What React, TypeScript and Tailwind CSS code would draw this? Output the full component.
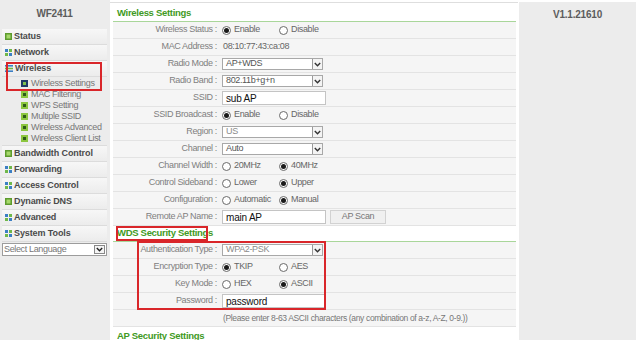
import React from 'react';

const font = "font-['Liberation_Sans',Arial,sans-serif]";

function Chevron() {
  return (
    <span className="flex h-full w-[10px] items-center justify-center border-l border-[#9a9a9a] bg-[#f4f4f4]">
      <svg width="7" height="5" viewBox="0 0 7 5">
        <path d="M0.8 1 L3.5 3.8 L6.2 1" fill="none" stroke="#333" strokeWidth="1.4" />
      </svg>
    </span>
  );
}

function Select({ value, muted }: { value: string; muted?: boolean }) {
  return (
    <div className="flex h-[12px] w-[101px] items-center justify-between border border-[#a8a8a8] bg-white">
      <span className={`pl-[3px] ${muted ? 'text-[#8a8a8a]' : 'text-[#555]'}`}>{value}</span>
      <Chevron />
    </div>
  );
}

function Input({ value }: { value: string }) {
  return (
    <div className="flex h-[14px] w-[104px] items-center border border-[#c4c4c4] bg-white pl-[3px] text-[10px] tracking-[-0.2px] text-[#111]">
      {value}
    </div>
  );
}

function Radio({ label, checked }: { label: string; checked?: boolean }) {
  return (
    <span className="flex w-[57px] items-center">
      <span className="flex h-[9px] w-[9px] items-center justify-center rounded-full border border-[#6a6a6a] bg-white">
        {checked && <span className="h-[5px] w-[5px] rounded-full bg-[#1a1a1a]" />}
      </span>
      <span className="ml-[3px] text-[#666]">{label}</span>
    </span>
  );
}

function Row({ label, children }: { label?: string; children: React.ReactNode }) {
  return (
    <div className="flex h-[17px] items-center border-b border-[#e3e3e3] bg-[#f5f5f5]">
      <div className="w-[106px] pr-[2px] text-right text-[#808080]">{label ? `${label} :` : ''}</div>
      <div className="flex items-center pl-[3px]">{children}</div>
    </div>
  );
}

function Header({ title, top }: { title: string; top?: boolean }) {
  return (
    <div className={`flex ${top ? 'h-[19px] pt-[2px]' : 'h-[16px]'} items-center border-b border-[#a9d69a] pl-[4px] text-[9.5px] font-bold tracking-[-0.3px] text-[#3f9a24]`}>
      {title}
    </div>
  );
}

function Icon({ kind }: { kind: string }) {
  if (kind === 'grid')
    return (
      <svg width="7" height="7" viewBox="0 0 7 7" className="shrink-0">
        <rect x="0" y="0" width="3" height="3" fill="#3b7fc4" />
        <rect x="4" y="0" width="3" height="3" fill="#6fb84a" />
        <rect x="0" y="4" width="3" height="3" fill="#6fb84a" />
        <rect x="4" y="4" width="3" height="3" fill="#3b7fc4" />
      </svg>
    );
  if (kind === 'lines')
    return (
      <svg width="8" height="7" viewBox="0 0 8 7" className="shrink-0">
        <rect x="0" y="0" width="8" height="1.6" fill="#3b7fc4" />
        <rect x="0" y="2.7" width="8" height="1.6" fill="#6fb84a" />
        <rect x="0" y="5.4" width="8" height="1.6" fill="#3b7fc4" />
      </svg>
    );
  if (kind === 'sel')
    return (
      <svg width="7" height="7" viewBox="0 0 7 7" className="shrink-0">
        <rect x="0" y="0" width="7" height="7" fill="#1f3a66" />
        <rect x="2" y="2" width="3" height="3" fill="#7fc24e" />
      </svg>
    );
  if (kind === 'sub')
    return (
      <svg width="7" height="7" viewBox="0 0 7 7" className="shrink-0">
        <rect x="0" y="0" width="7" height="7" fill="#8cc63f" />
        <rect x="2" y="2" width="3" height="3" fill="#2d5a1a" />
      </svg>
    );
  return (
    <svg width="7" height="7" viewBox="0 0 7 7" className="shrink-0">
      <rect x="0" y="0" width="7" height="7" fill="#5d9b2e" />
      <rect x="1.5" y="1.5" width="4" height="4" fill="#a6d86a" />
    </svg>
  );
}

function MenuItem({ label, icon }: { label: string; icon: string }) {
  return (
    <div className="flex h-[16px] items-center gap-[2px] border-b border-[#dcdcdc] bg-gradient-to-b from-[#f7f7f7] to-[#ececec] pl-[3px] text-[9px] font-bold tracking-[-0.1px] text-[#4a4a4a]">
      <Icon kind={icon} />
      <span>{label}</span>
    </div>
  );
}

function SubItem({ label, selected }: { label: string; selected?: boolean }) {
  return (
    <div className="flex h-[11px] items-center gap-[3px] pl-[19px] text-[#777]">
      <Icon kind={selected ? 'sel' : 'sub'} />
      <span>{label}</span>
    </div>
  );
}

export default function App() {
  return (
    <div className={`${font} relative flex h-[340px] w-[636px] overflow-hidden bg-white text-[9px] tracking-[-0.35px]`}>
      {/* Sidebar */}
      <div className="w-[110px] shrink-0 bg-[#ececec] pl-[2px] pr-[3px]">
        <div className="flex h-[29px] items-start justify-center pt-[6px] text-[10px] font-bold tracking-[-0.2px] text-[#5c5c5c]">
          WF2411
        </div>
        <MenuItem icon="sq" label="Status" />
        <MenuItem icon="grid" label="Network" />
        <MenuItem icon="lines" label="Wireless" />
        <div className="border-b border-[#dcdcdc] pt-[1px] pb-[1px]">
          <SubItem label="Wireless Settings" selected />
          <SubItem label="MAC Filtering" />
          <SubItem label="WPS Setting" />
          <SubItem label="Multiple SSID" />
          <SubItem label="Wireless Advanced" />
          <SubItem label="Wireless Client List" />
        </div>
        <MenuItem icon="sq" label="Bandwidth Control" />
        <MenuItem icon="grid" label="Forwarding" />
        <MenuItem icon="grid" label="Access Control" />
        <MenuItem icon="sq" label="Dynamic DNS" />
        <MenuItem icon="grid" label="Advanced" />
        <MenuItem icon="grid" label="System Tools" />
        <div className="mt-[1px] flex h-[13px] items-center justify-between border border-[#9c9c9c] bg-white">
          <span className="pl-[1px] text-[#777]">Select Language</span>
          <span className="mr-[1px] flex h-[9px] w-[11px] items-center justify-center border border-[#888] bg-[#f4f4f4]">
            <svg width="7" height="5" viewBox="0 0 7 5">
              <path d="M0.8 1 L3.5 3.8 L6.2 1" fill="none" stroke="#222" strokeWidth="1.4" />
            </svg>
          </span>
        </div>
      </div>

      {/* Main */}
      <div className="mt-[2px] w-[408px] shrink-0 border-t border-[#dedede] bg-white pl-[3px] pr-[2px]">
        <Header title="Wireless Settings" top />
        <Row label="Wireless Status">
          <Radio label="Enable" checked />
          <Radio label="Disable" />
        </Row>
        <Row label="MAC Address">
          <span className="pl-[1px] text-[#666]">08:10:77:43:ca:08</span>
        </Row>
        <Row label="Radio Mode">
          <Select value="AP+WDS" />
        </Row>
        <Row label="Radio Band">
          <Select value="802.11b+g+n" />
        </Row>
        <Row label="SSID">
          <Input value="sub AP" />
        </Row>
        <Row label="SSID Broadcast">
          <Radio label="Enable" checked />
          <Radio label="Disable" />
        </Row>
        <Row label="Region">
          <Select value="US" muted />
        </Row>
        <Row label="Channel">
          <Select value="Auto" />
        </Row>
        <Row label="Channel Width">
          <Radio label="20MHz" />
          <Radio label="40MHz" checked />
        </Row>
        <Row label="Control Sideband">
          <Radio label="Lower" />
          <Radio label="Upper" checked />
        </Row>
        <Row label="Configuration">
          <Radio label="Automatic" />
          <Radio label="Manual" checked />
        </Row>
        <Row label="Remote AP Name">
          <Input value="main AP" />
          <button className="ml-[4px] flex h-[14px] w-[56px] items-center justify-center border border-[#d2d2d2] bg-[#f0f0f0] text-[#777]">
            AP Scan
          </button>
        </Row>
        <Header title="WDS Security Settings" />
        <Row label="Authentication Type">
          <Select value="WPA2-PSK" muted />
        </Row>
        <Row label="Encryption Type">
          <Radio label="TKIP" checked />
          <Radio label="AES" />
        </Row>
        <Row label="Key Mode">
          <Radio label="HEX" />
          <Radio label="ASCII" checked />
        </Row>
        <Row label="Password">
          <Input value="password" />
        </Row>
        <Row>
          <span className="pl-[1px] text-[8.5px] text-[#777]">
            (Please enter 8-63 ASCII characters (any combination of a-z, A-Z, 0-9.))
          </span>
        </Row>
        <div className="flex h-[16px] items-center pl-[4px] pt-[2px] text-[9.5px] font-bold tracking-[-0.3px] text-[#3f9a24]">
          AP Security Settings
        </div>
      </div>

      {/* Right panel */}
      <div className="ml-[1px] mt-[2px] flex-1 bg-[#ececec]">
        <div className="pt-[5px] text-center text-[10px] font-bold tracking-[-0.2px] text-[#5c5c5c]">V1.1.21610</div>
      </div>

      {/* Annotation boxes */}
      <div className="pointer-events-none absolute left-[6px] top-[62px] h-[29px] w-[96px] border-2 border-[#d9262a]" />
      <div className="pointer-events-none absolute left-[116px] top-[226px] h-[15px] w-[92px] border-2 border-[#d9262a]" />
      <div className="pointer-events-none absolute left-[137px] top-[241px] h-[69px] w-[189px] border-2 border-[#d9262a]" />
    </div>
  );
}
